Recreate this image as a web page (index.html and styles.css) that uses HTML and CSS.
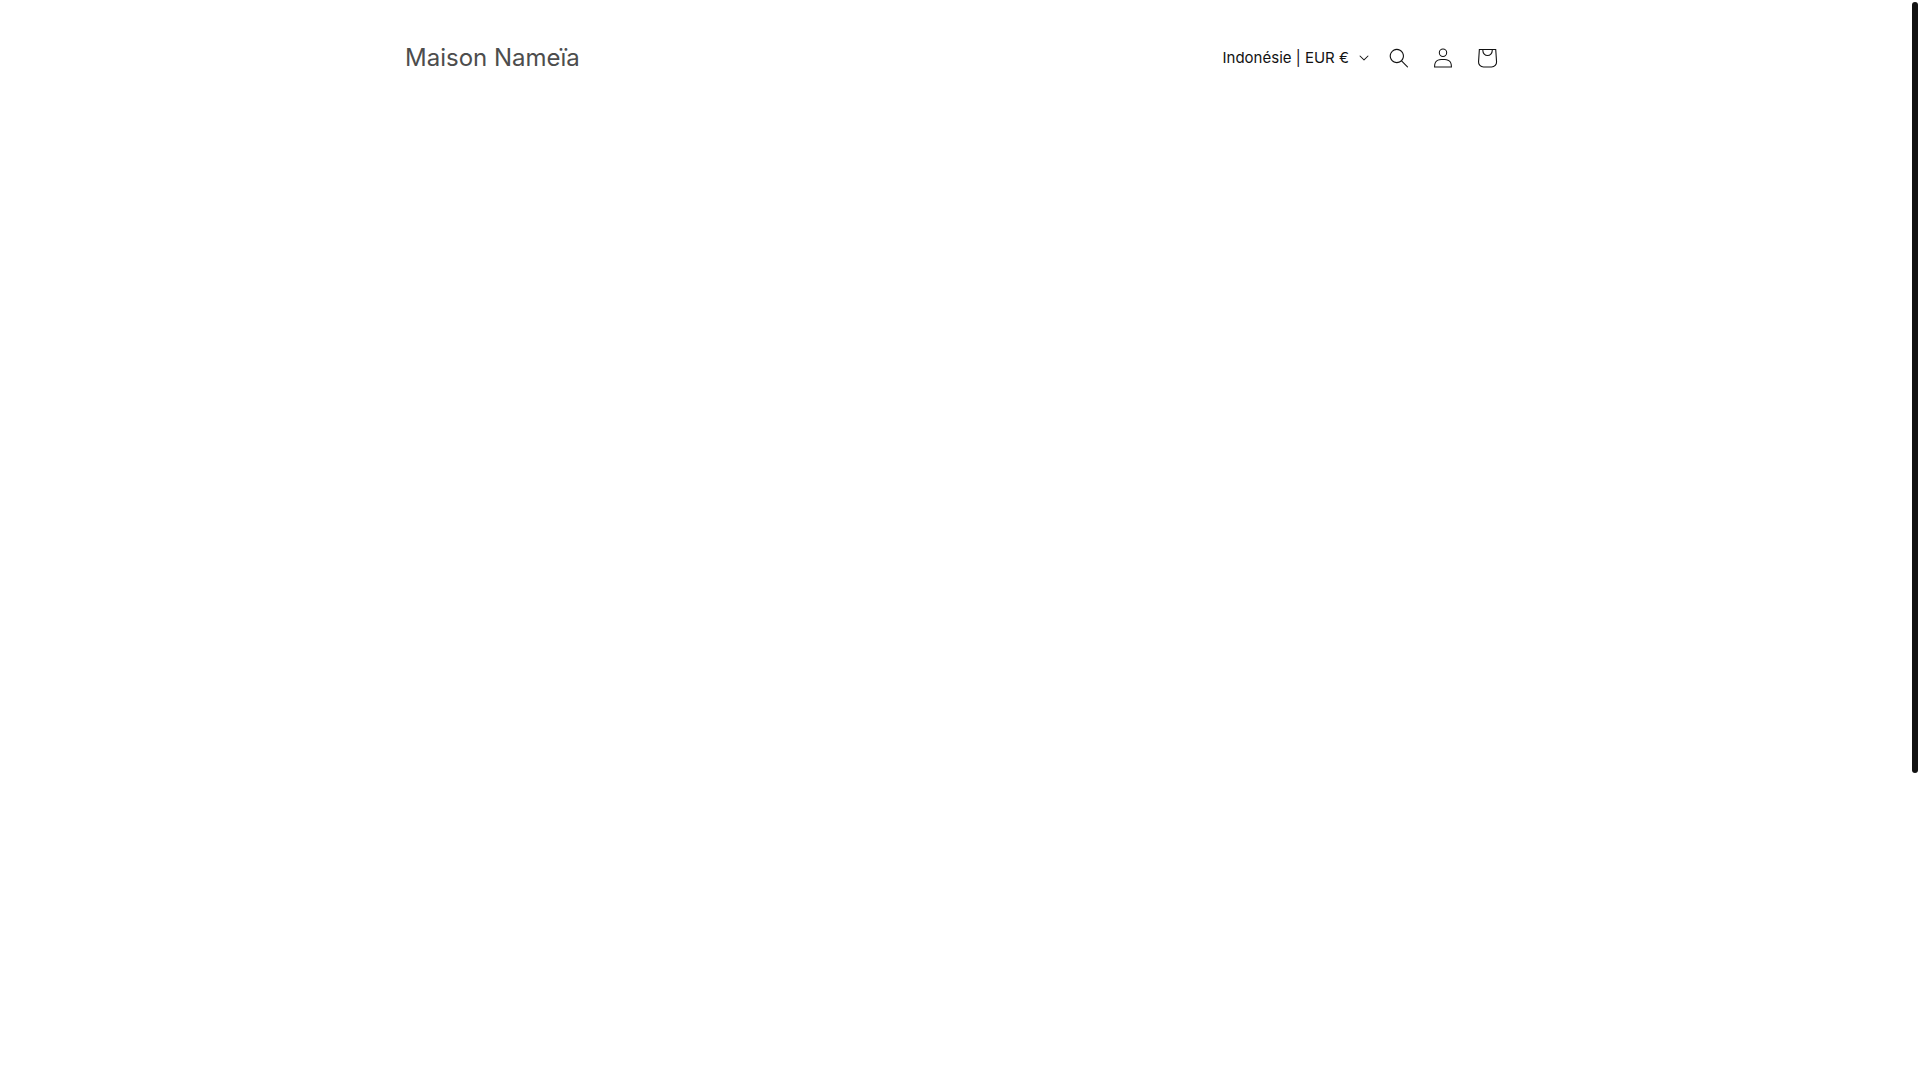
FILE: index.html
```html
<!DOCTYPE html>
<html lang="fr">
<head>
    <meta charset="utf-8">
    <meta name="viewport" content="width=device-width, initial-scale=1">
    <title>Maison Nameïa</title>
    <link rel="stylesheet" href="styles.css">
</head>
<body>
    <header class="header">
        <a class="header-logo" href="/">Maison Nameïa</a>

        <div class="header-tools">
            <button class="country-button" type="button" aria-expanded="false">
                <span>Indonésie | EUR €</span>
                <svg class="icon-caret" viewBox="0 0 10 6" aria-hidden="true">
                    <path d="M9.354.646a.5.5 0 00-.708 0L5 4.293 1.354.646a.5.5 0 00-.708.708l4 4a.5.5 0 00.708 0l4-4a.5.5 0 000-.708z"/>
                </svg>
            </button>
            <button class="header-icon" type="button" aria-label="Recherche">
                <svg class="icon" viewBox="0 0 18 19" aria-hidden="true">
                    <path fill-rule="evenodd" d="M11.03 11.68A5.784 5.784 0 112.85 3.5a5.784 5.784 0 018.18 8.18zm.26 1.12a6.78 6.78 0 11.72-.7l5.4 5.4a.5.5 0 11-.71.7l-5.41-5.4z"/>
                </svg>
            </button>
            <a class="header-icon" href="/account" aria-label="Connexion">
                <svg class="icon" viewBox="0 0 18 19" aria-hidden="true">
                    <path fill-rule="evenodd" d="M6 4.5a3 3 0 116 0 3 3 0 01-6 0zm3-4a4 4 0 100 8 4 4 0 000-8zm5.58 12.15c1.12.82 1.83 2.24 1.91 4.85H1.51c.08-2.6.79-4.03 1.9-4.85C4.66 11.75 6.5 11.5 9 11.5s4.35.26 5.58 1.15zM9 10.5c-2.5 0-4.65.24-6.17 1.35C1.27 12.98.5 14.93.5 18v.5h17V18c0-3.07-.77-5.02-2.33-6.15-1.52-1.1-3.67-1.35-6.17-1.35z"/>
                </svg>
            </a>
            <a class="header-icon" href="/cart" aria-label="Panier">
                <svg class="icon-cart" viewBox="0 0 40 40" aria-hidden="true">
                    <path fill-rule="evenodd" d="M15.75 11.8h-3.16l-.77 11.6a5 5 0 0 0 4.99 5.34h7.38a5 5 0 0 0 4.99-5.33l-.78-11.61zm0 1h-2.22l-.71 10.67a4 4 0 0 0 3.99 4.27h7.38a4 4 0 0 0 4-4.27l-.72-10.67h-2.22v.63a4.75 4.75 0 1 1-9.5 0zm8.5 0h-7.5v.63a3.75 3.75 0 1 0 7.5 0z"/>
                </svg>
            </a>
        </div>
    </header>

    <main></main>

    <!-- Barre de défilement -->
    <div class="scroll-thumb" aria-hidden="true"></div>
</body>
</html>
```

FILE: styles.css
```css
* {
    box-sizing: border-box;
}
body {
    margin: 0;
    min-height: 100vh;
    background-color: #fff;
    color: #121212;
    font-family: Inter, sans-serif;
}
.header {
    display: flex;
    justify-content: space-between;
    align-items: center;
    max-width: 1110px;
    margin: 0 auto;
    padding: 36px 6px 36px 0;
}
.header-logo {
    color: #4d4d4d;
    font-size: 24px;
    line-height: 36px;
    text-decoration: none;
}
.header-tools {
    display: flex;
    align-items: center;
}
.country-button {
    display: flex;
    align-items: center;
    gap: 10px;
    padding: 10px 8px;
    border: none;
    background: none;
    color: inherit;
    font-family: inherit;
    font-size: 15px;
    line-height: 24px;
    cursor: pointer;
}
.header-icon {
    display: flex;
    justify-content: center;
    align-items: center;
    width: 44px;
    height: 44px;
    padding: 0;
    border: none;
    background: none;
    color: inherit;
    cursor: pointer;
}
.icon {
    width: 20px;
    height: 20px;
    fill: currentColor;
}
.icon-cart {
    width: 44px;
    height: 44px;
    fill: currentColor;
}
.icon-caret {
    width: 10px;
    height: 6px;
    fill: currentColor;
}
.scroll-thumb {
    position: fixed;
    top: 2px;
    right: 2px;
    width: 6px;
    height: 71.4vh;
    border-radius: 3px;
    background-color: #121212;
}
@media (max-width: 1200px) {
    .header {
        padding-left: 24px;
        padding-right: 24px;
    }
}
```
